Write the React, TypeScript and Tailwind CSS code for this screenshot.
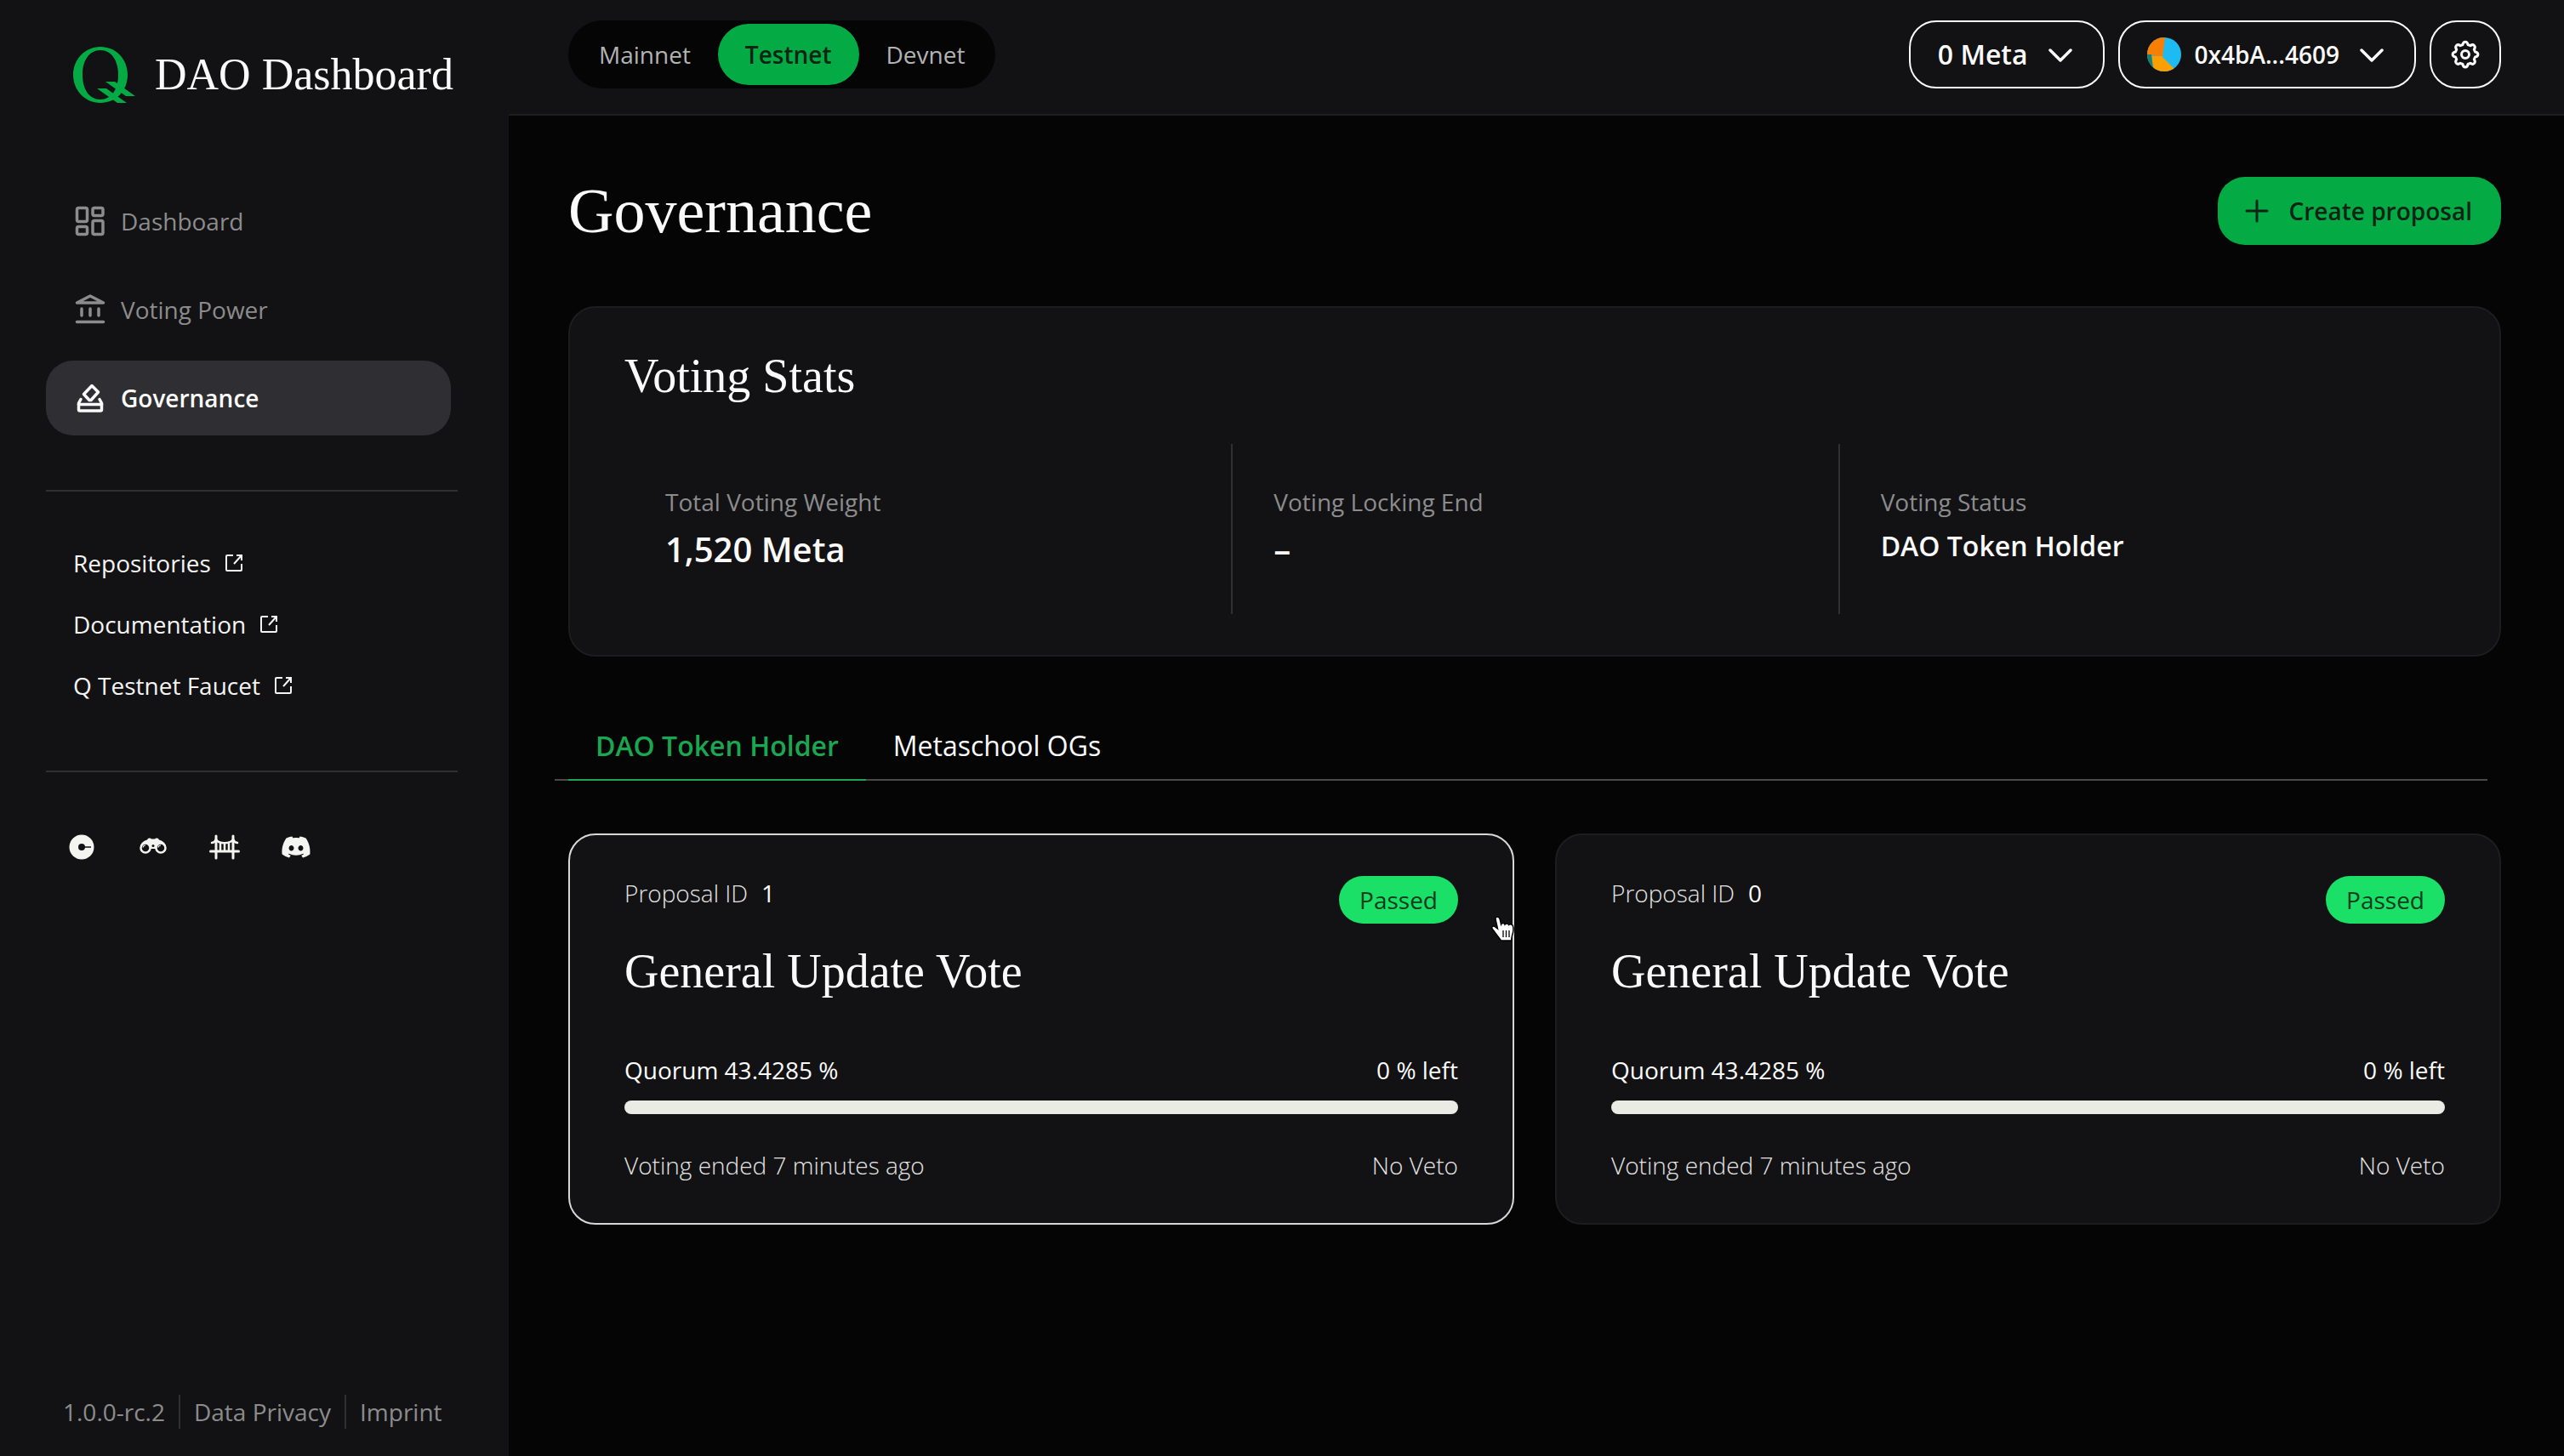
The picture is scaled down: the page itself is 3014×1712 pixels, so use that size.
import React from "react";
import { FaDiscord } from "react-icons/fa6";

const serif = "font-['Liberation_Serif',serif]";

function QLogo() {
  return (
    <svg viewBox="0 0 74 68" className="h-[68px] w-[74px] shrink-0" fill="#04ab45" aria-hidden="true">
      <path
        fillRule="evenodd"
        d="M32 1C50 1 64 15 64 34S50 67 32 67S0 52 0 34S14 1 32 1ZM32 5C19 5 11 17 11 34S19 63 32 63S53 51 53 34S45 5 32 5Z"
      />
      <path d="M38 42h11l24 17H62Z" />
      <path d="M28 50h11l24 17H52Z" />
    </svg>
  );
}

function DashboardIcon() {
  return (
    <svg viewBox="0 0 40 40" className="size-10" fill="none" stroke="currentColor" strokeWidth="3.5" aria-hidden="true">
      <rect x="4.5" y="4.5" width="12" height="16" rx="2" />
      <rect x="23" y="4.5" width="12" height="9" rx="2" />
      <rect x="4.5" y="26.5" width="12" height="9" rx="2" />
      <rect x="23" y="19.5" width="12" height="16" rx="2" />
    </svg>
  );
}

function BankIcon() {
  return (
    <svg viewBox="0 0 40 40" className="size-10" fill="none" stroke="currentColor" strokeWidth="3.5" strokeLinecap="round" strokeLinejoin="round" aria-hidden="true">
      <path d="M4.5 12 20 4l15.500 8Z" />
      <path d="M10 19v8M20 19v8M30 19v8" />
      <path d="M4.5 34.500h31" />
    </svg>
  );
}

function BallotIcon() {
  return (
    <svg viewBox="0 0 40 40" className="size-10" fill="none" stroke="currentColor" strokeWidth="3.5" strokeLinecap="round" strokeLinejoin="round" aria-hidden="true">
      <path d="M22 5.500 29.500 13 21 22.500H19L12.500 15.500Z" />
      <path d="M9 21.500 6.500 26V33.500a1.500 1.500 0 0 0 1.500 1.500H32a1.500 1.500 0 0 0 1.500-1.500V26L31 21.500" />
      <path d="M6.500 27.500h27" />
    </svg>
  );
}

function ExternalIcon() {
  return (
    <svg viewBox="0 0 22 22" className="size-[22px]" fill="none" stroke="currentColor" strokeWidth="2" aria-hidden="true">
      <path d="M10 2H3a1 1 0 0 0-1 1v16a1 1 0 0 0 1 1h16a1 1 0 0 0 1-1v-7" />
      <path d="M14 2h6v6M20 2 11 12" />
    </svg>
  );
}

function CoinIcon() {
  return (
    <svg viewBox="0 0 36 36" className="size-9" aria-hidden="true">
      <circle cx="18" cy="18" r="14.500" fill="currentColor" />
      <circle cx="18" cy="18" r="4" fill="#121214" />
      <path d="M20 18h9" stroke="#121214" strokeWidth="1.500" />
    </svg>
  );
}

function BinocularsIcon() {
  return (
    <svg viewBox="0 0 36 36" className="size-9" aria-hidden="true">
      <path fill="currentColor" d="M3 16C5 12 8 10 11 9.500 12 7 15 7 16 8.500h4C21 7 24 7 25 9.500 28 10 31 12 33 16L27 22l-7-2h-4l-7 2Z" />
      <circle cx="9" cy="19" r="5.500" fill="#121214" stroke="currentColor" strokeWidth="2.500" />
      <circle cx="27" cy="19" r="5.500" fill="#121214" stroke="currentColor" strokeWidth="2.500" />
      <circle cx="18" cy="16.500" r="1.500" fill="#121214" />
      <path d="M6 18.500a3 3 0 0 1 3-2.500M24 18.500a3 3 0 0 1 3-2.500" fill="none" stroke="currentColor" strokeWidth="1.200" />
    </svg>
  );
}

function BridgeIcon() {
  return (
    <svg viewBox="0 0 36 36" className="size-9" fill="none" stroke="currentColor" strokeLinecap="round" aria-hidden="true">
      <path strokeWidth="3" d="M8 5v26M28 5v26M1.500 23h33" />
      <path strokeWidth="2.500" d="M3 13c2.500-.5 4-1.500 5-4 3 5.500 17 5.500 20 0 1 2.500 2.500 3.500 5 4" />
      <path strokeWidth="2.500" d="M13 14v8M18 14v8M23 14v8" />
    </svg>
  );
}

function Chevron() {
  return (
    <svg viewBox="0 0 28 28" className="size-7" fill="none" stroke="currentColor" strokeWidth="3.500" strokeLinecap="round" strokeLinejoin="round" aria-hidden="true">
      <path d="m2 9 12 12L26 9" />
    </svg>
  );
}

function Avatar() {
  return (
    <svg viewBox="0 0 40 40" className="size-10" aria-hidden="true">
      <clipPath id="avatar-clip">
        <circle cx="20" cy="20" r="20" />
      </clipPath>
      <g clipPath="url(#avatar-clip)">
        <rect width="40" height="40" fill="#1ebbf2" />
        <path d="M21 0 18 23 0 20V0Z" fill="#f97f04" />
        <path d="M5 22 17 22 33 38 30 40H8Z" fill="#fb9f03" />
        <path d="M0 20h5l2 17L0 34Z" fill="#19826f" />
      </g>
    </svg>
  );
}

function GearIcon() {
  return (
    <svg viewBox="0 0 40 40" className="size-10" fill="none" stroke="currentColor" strokeWidth="3" strokeLinejoin="round" aria-hidden="true">
      <path d="M17 8.500C17.500 4 22.500 4 23 8.500L25.900 9.700C29.500 7 33 10.500 30.300 14.100L31.500 17C36 17.500 36 22.500 31.500 23L30.300 25.900C33 29.500 29.500 33 25.900 30.300L23 31.500C22.500 36 17.500 36 17 31.500L14.100 30.300C10.500 33 7 29.500 9.700 25.900L8.500 23C4 22.500 4 17.500 8.500 17L9.700 14.100C7 10.500 10.500 7 14.100 9.700Z" />
      <circle cx="20" cy="20" r="4.500" />
    </svg>
  );
}

function HandCursor() {
  return (
    <svg viewBox="0 0 30 32" className="h-8 w-[30px]" aria-hidden="true">
      <path
        d="M8 2c2 0 3 1.500 3.500 4l1 5c1-2 4-2 4.500 0 1-1.500 4-1.500 4.500.5C23.500 10 26 11 26.500 13c1 4 .5 7-1 11l-1 6h-12L8 24 2 16c-1-2 1-4 3-2.500L8.500 16 6 5C5.700 3 6.500 2 8 2Z"
        fill="#fff"
        stroke="#000"
        strokeWidth="1.500"
      />
      <path d="M15 18v8M18.500 18v8M22 18v8" stroke="#000" strokeWidth="1.300" />
    </svg>
  );
}

const navItems = [
  { label: "Dashboard", icon: <DashboardIcon />, active: false },
  { label: "Voting Power", icon: <BankIcon />, active: false },
  { label: "Governance", icon: <BallotIcon />, active: true },
];

const socials = [
  { label: "Coin", icon: <CoinIcon /> },
  { label: "Explorer", icon: <BinocularsIcon /> },
  { label: "Bridge", icon: <BridgeIcon /> },
  { label: "Discord", icon: <FaDiscord className="size-9" /> },
];

function Sidebar() {
  return (
    <aside className="flex w-[598px] shrink-0 flex-col bg-[#121214] pb-8 pl-[54px] pr-[60px]">
      <a href="#home" className="mt-[54px] flex items-center gap-[22px] pl-8">
        <QLogo />
        <span className={`${serif} text-[52px] leading-[68px] whitespace-nowrap`}>DAO Dashboard</span>
      </a>
      <nav className="mt-[94px] flex flex-col gap-4 pr-2">
        {navItems.map((item) => (
          <a
            key={item.label}
            href="#nav"
            className={
              item.active
                ? "flex h-[88px] items-center gap-4 rounded-[32px] bg-[#2f2e33] pl-8 font-semibold text-[#fafafa]"
                : "flex h-[88px] items-center gap-4 rounded-[32px] pl-8 text-[#8c8c8d]"
            }
          >
            {item.icon}
            {item.label}
          </a>
        ))}
      </nav>
      <hr className="mt-16 border-t-2 border-[#303032]" />
      <nav className="flex flex-col gap-8 pb-20 pl-8 pt-16 text-[#f4f4f2]">
        {["Repositories", "Documentation", "Q Testnet Faucet"].map((label) => (
          <a key={label} href="#link" className="flex h-10 items-center gap-4">
            {label}
            <ExternalIcon />
          </a>
        ))}
      </nav>
      <hr className="border-t-2 border-[#303032]" />
      <div className="mt-[70px] flex gap-12 pl-6 text-[#f4f4f0]">
        {socials.map((s) => (
          <a key={s.label} href="#social" aria-label={s.label}>
            {s.icon}
          </a>
        ))}
      </div>
      <footer className="mt-auto flex h-10 items-center pl-5 text-[#8c8c8d]">
        <span className="pr-4">1.0.0-rc.2</span>
        <a href="#privacy" className="border-l-2 border-[#303032] px-4">Data Privacy</a>
        <a href="#imprint" className="border-l-2 border-[#303032] pl-4">Imprint</a>
      </footer>
    </aside>
  );
}

function TopBar() {
  return (
    <header className="flex h-[136px] items-start justify-between border-b-2 border-[#1e1e1f] bg-[#121214] pl-[70px] pr-[74px] pt-6">
      <div className="flex h-20 items-center rounded-[40px] bg-[#050505] p-1 text-[#b3b3b3]">
        <button className="h-[72px] rounded-[36px] px-8">Mainnet</button>
        <button className="h-[72px] rounded-[36px] bg-[#04ab45] px-8 font-semibold text-[#0b2414]">Testnet</button>
        <button className="h-[72px] rounded-[36px] px-8">Devnet</button>
      </div>
      <div className="flex gap-4 font-semibold text-[#fafafa]">
        <button className="flex h-20 items-center gap-6 rounded-[32px] border-2 border-[#fafafa] pl-8 pr-9 text-[32px]">
          0 Meta
          <Chevron />
        </button>
        <button className="flex h-20 items-center gap-4 rounded-[32px] border-2 border-[#fafafa] pl-8 pr-9">
          <Avatar />
          <span className="pr-2">0x4bA...4609</span>
          <Chevron />
        </button>
        <button aria-label="Settings" className="flex h-20 w-[84px] items-center justify-center rounded-[32px] border-2 border-[#fafafa]">
          <GearIcon />
        </button>
      </div>
    </header>
  );
}

function VotingStats() {
  return (
    <section className="mt-[72px] rounded-[32px] border-2 border-[#1d1d1f] bg-[#121214] px-16 pb-12 pt-[46px]">
      <h2 className={`${serif} text-[56px] leading-[68px]`}>Voting Stats</h2>
      <dl className="mt-[46px] grid grid-cols-3">
        <div className="h-[200px] px-12 pt-12">
          <dt className="leading-10 text-[#8c8c8d]">Total Voting Weight</dt>
          <dd className="text-[40px] font-semibold leading-[72px]">1,520 Meta</dd>
        </div>
        <div className="h-[200px] border-l-2 border-[#303032] px-12 pt-12">
          <dt className="leading-10 text-[#8c8c8d]">Voting Locking End</dt>
          <dd className="text-[40px] font-semibold leading-[72px]">–</dd>
        </div>
        <div className="h-[200px] border-l-2 border-[#303032] px-12 pt-12">
          <dt className="leading-10 text-[#8c8c8d]">Voting Status</dt>
          <dd className="text-[32px] font-semibold leading-[64px]">DAO Token Holder</dd>
        </div>
      </dl>
    </section>
  );
}

function ProposalCard({ id, hovered }: { id: number; hovered: boolean }) {
  return (
    <article
      className={
        hovered
          ? "relative rounded-[32px] border-2 border-[#d8d8d8] bg-[#121214] px-16 pb-12 pt-12"
          : "relative rounded-[32px] border-2 border-[#1d1d1f] bg-[#121214] px-16 pb-12 pt-12"
      }
    >
      <div className="flex items-start justify-between">
        <p className="flex gap-4 leading-10">
          <span className="font-light text-[#e4e4e4]">Proposal ID</span>
          <span>{id}</span>
        </p>
        <span className="flex h-14 items-center rounded-full bg-[#1ae068] px-6 text-[#0b3a1d]">Passed</span>
      </div>
      <h3 className={`${serif} mt-[22px] text-[56px] leading-[68px]`}>General Update Vote</h3>
      <div className="mt-[62px] flex justify-between leading-10">
        <span>Quorum 43.4285 %</span>
        <span>0 % left</span>
      </div>
      <div className="mt-4 h-4 rounded-full bg-[#ebebe6]" />
      <div className="mt-10 flex justify-between font-light leading-10 text-[#e4e4e4]">
        <span>Voting ended 7 minutes ago</span>
        <span>No Veto</span>
      </div>
      {hovered && (
        <div className="absolute -right-1 top-[94px]">
          <HandCursor />
        </div>
      )}
    </article>
  );
}

export default function App() {
  return (
    <div className="flex min-h-screen bg-[#050505] font-['Open_Sans',sans-serif] text-[28px] leading-10 text-[#fafafa]">
      <Sidebar />
      <div className="min-w-0 flex-1">
        <TopBar />
        <main className="pl-[70px] pr-[74px] pt-[72px]">
          <div className="flex h-20 items-center justify-between">
            <h1 className={`${serif} text-[74px] leading-20`}>Governance</h1>
            <button className="flex h-20 items-center gap-6 rounded-[32px] bg-[#04ab45] pl-8 pr-[34px] font-semibold text-[#0b2414]">
              <svg viewBox="0 0 28 28" className="size-7" fill="none" stroke="currentColor" strokeWidth="3" strokeLinecap="round" aria-hidden="true">
                <path d="M14 2v24M2 14h24" />
              </svg>
              Create proposal
            </button>
          </div>
          <VotingStats />
          <div role="tablist" className="-ml-4 mr-4 mt-[66px] flex border-b-2 border-[#4a4a4a] pl-4 text-[32px]">
            <button role="tab" aria-selected="true" className="-mb-[2px] h-20 border-b-2 border-[#1ba651] px-8 font-semibold text-[#1ba651]">
              DAO Token Holder
            </button>
            <button role="tab" aria-selected="false" className="h-[78px] px-8">
              Metaschool OGs
            </button>
          </div>
          <div className="mt-[62px] grid grid-cols-2 gap-12">
            <ProposalCard id={1} hovered />
            <ProposalCard id={0} hovered={false} />
          </div>
        </main>
      </div>
    </div>
  );
}
